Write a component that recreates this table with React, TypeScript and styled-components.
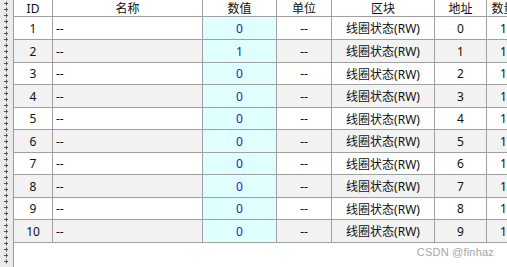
import * as React from "react";
import styled, { createGlobalStyle } from "styled-components";

const GlobalStyle = createGlobalStyle`
    html, body {
        margin: 0;
        padding: 0;
        background: #ffffff;
    }
    body {
        font-family: "Noto Sans", "Noto Sans CJK SC", sans-serif;
        font-size: 12px;
        color: #111111;
    }
`

const Frame = styled.div`
    display: flex;
    width: 507px;
    height: 267px;
    overflow: hidden;
    background: #ffffff;
`

const Grip = styled.div`
    flex: 0 0 14px;
    height: 100%;
    background: #ebebeb;
    border-right: 1px solid #9c9c9c;
    box-sizing: border-box;
    display: flex;
    justify-content: flex-start;
`

const Main = styled.div`
    flex: 1 1 auto;
    display: flex;
    flex-direction: column;
    min-width: 0;
`

const Table = styled.div`
    display: flex;
    flex-direction: column;
    width: 508px;
`

const Row = styled.div<{ $h: number; $alt?: boolean }>`
    display: flex;
    height: ${p => p.$h}px;
    box-sizing: border-box;
    border-bottom: 1px solid #a0a0a0;
    background: ${p => (p.$alt ? "#f2f2f2" : "#ffffff")};
`

const Cell = styled.div<{ $w: number; $align?: string; $cyan?: boolean }>`
    flex: 0 0 ${p => p.$w}px;
    box-sizing: border-box;
    border-right: 1px solid #a0a0a0;
    display: flex;
    align-items: center;
    justify-content: ${p => p.$align || "center"};
    padding-left: ${p => (p.$align === "flex-start" ? "3px" : "0")};
    background: ${p => (p.$cyan ? "#e0ffff" : "transparent")};
    white-space: nowrap;
    overflow: hidden;
`

const HeadCell = styled(Cell)`
    color: #111;
`

const Value = styled.span`
    color: #2424b8;
`

const Footer = styled.div`
    flex: 1 1 auto;
    display: flex;
    align-items: flex-end;
    justify-content: flex-end;
    padding: 0 13px 9px 0;
`

const Watermark = styled.span`
    font-family: "Liberation Sans", Arial, sans-serif;
    font-size: 11px;
    color: #a6a6a6;
    letter-spacing: 0.2px;
`

const cols = [39, 150, 74, 55, 103, 52, 34];
const heights = [23, 23, 22, 23, 22, 23, 22, 23, 22, 23];
const values = [0, 1, 0, 0, 0, 0, 0, 0, 0, 0];

function GripMarks() {
    const marks = [];
    for (let y = 3; y < 267; y += 6) {
        marks.push(
            <g key={y}>
                <line x1="4" x2="8" y1={y + 0.5} y2={y + 0.5} stroke="#555" strokeWidth="1" />
                <line x1="6.5" x2="6.5" y1={y - 1.5} y2={y + 2.5} stroke="#555" strokeWidth="1" />
            </g>
        );
    }
    return (
        <svg width="13" height="267" viewBox="0 0 13 267">
            {marks}
        </svg>
    );
}

export default function App() {
    return (
        <Frame>
            <GlobalStyle />
            <Grip>
                <GripMarks />
            </Grip>
            <Main>
                <Table>
                    <Row $h={17}>
                        <HeadCell $w={cols[0]}>ID</HeadCell>
                        <HeadCell $w={cols[1]}>名称</HeadCell>
                        <HeadCell $w={cols[2]}>数值</HeadCell>
                        <HeadCell $w={cols[3]}>单位</HeadCell>
                        <HeadCell $w={cols[4]}>区块</HeadCell>
                        <HeadCell $w={cols[5]}>地址</HeadCell>
                        <HeadCell $w={cols[6]}>数量</HeadCell>
                    </Row>
                    {values.map((v, i) => (
                        <Row key={i} $h={heights[i]} $alt={i % 2 === 1}>
                            <Cell $w={cols[0]}>{i + 1}</Cell>
                            <Cell $w={cols[1]} $align="flex-start">--</Cell>
                            <Cell $w={cols[2]} $cyan><Value>{v}</Value></Cell>
                            <Cell $w={cols[3]}>--</Cell>
                            <Cell $w={cols[4]}>线圈状态(RW)</Cell>
                            <Cell $w={cols[5]}>{i}</Cell>
                            <Cell $w={cols[6]}>1</Cell>
                        </Row>
                    ))}
                </Table>
                <Footer>
                    <Watermark>CSDN @finhaz</Watermark>
                </Footer>
            </Main>
        </Frame>
    );
}
